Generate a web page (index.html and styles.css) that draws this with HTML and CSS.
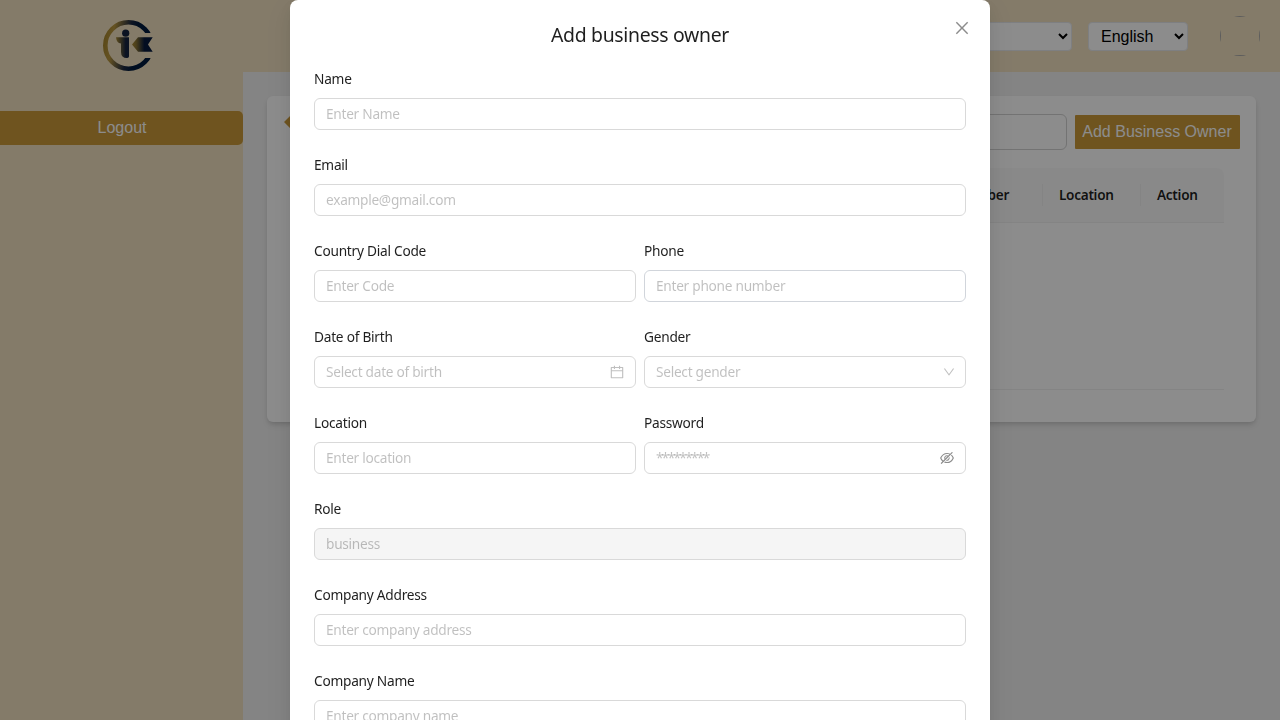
FILE: index.html
```html
<!DOCTYPE html>
<html lang="en">
<head>
<meta charset="utf-8">
<title>Add business owner</title>
<link rel="stylesheet" href="styles.css">
</head>
<body>
<div class="app">
  <aside class="sidebar">
    <svg class="logo" viewBox="102 19 52 53">
      <defs>
        <linearGradient id="ring" gradientUnits="userSpaceOnUse" x1="103" x2="153" y1="40" y2="48"><stop offset="0" stop-color="#a5842c"/><stop offset=".18" stop-color="#b8963f"/><stop offset=".5" stop-color="#1a2740"/><stop offset=".65" stop-color="#001a3c"/></linearGradient>
        <linearGradient id="body" x1="0" x2="1"><stop offset="0" stop-color="#a98a34"/><stop offset=".75" stop-color="#14233e"/></linearGradient>
        <linearGradient id="flag" x1="0" x2="1"><stop offset="0" stop-color="#a98a34"/><stop offset=".2" stop-color="#8a7434"/><stop offset=".6" stop-color="#061a3c"/></linearGradient>
        <clipPath id="gap"><path d="M102 19h52v14h-24v25h24v14h-52z"/></clipPath>
      </defs>
      <circle cx="128.500" cy="45.500" r="23.200" fill="none" stroke="url(#ring)" stroke-width="4.600" clip-path="url(#gap)"/>
      <circle cx="125.700" cy="33.200" r="3.600" fill="#14233e"/>
      <path d="M116 37.300H129V56.500Q128.500 58 127 58Q121 58 121 52V43.500Q116.500 43 116 37.300z" fill="url(#body)"/>
      <path d="M132 44.600L138 37.200H152.700L148 44.600L152.700 51.700H138z" fill="url(#flag)"/>
    </svg>
    <button class="logout">Logout</button>
  </aside>
  <div class="main">
    <header class="topbar">
      <select class="pick pick-wide"><option></option></select>
      <select class="pick"><option>English</option></select>
      <div class="avatar"><div class="avatar-img"></div></div>
    </header>
    <section class="card">
      <div class="toolbar">
        <svg class="back" viewBox="0 0 14 14"><path d="M0 7L7 0v4h7v6H7v4z" fill="#ca993a"/></svg>
        <input class="search">
        <button class="add">Add Business Owner</button>
      </div>
      <div class="table">
        <div class="thead">
          <div class="th th-grow">Phone Number</div>
          <div class="th th-loc">Location</div>
          <div class="th th-act">Action</div>
        </div>
        <div class="tbody"></div>
      </div>
    </section>
  </div>
</div>
<div class="mask">
  <div class="modal">
    <button class="close"><svg viewBox="64 64 896 896"><path d="M799.86 166.31c.02 0 .04.02.08.06l57.69 57.7c.04.03.05.05.06.08a.12.12 0 010 .06c0 .03-.02.05-.06.09L569.93 512l287.7 287.7c.04.04.05.06.06.09a.12.12 0 010 .07c0 .02-.02.04-.06.08l-57.7 57.69c-.03.04-.05.05-.07.06a.12.12 0 01-.07 0c-.03 0-.05-.02-.09-.06L512 569.93l-287.7 287.7c-.04.04-.06.05-.09.06a.12.12 0 01-.07 0c-.02 0-.04-.02-.08-.06l-57.69-57.7c-.04-.03-.05-.05-.06-.07a.12.12 0 010-.07c0-.03.02-.05.06-.09L454.07 512l-287.7-287.7c-.04-.04-.05-.06-.06-.09a.12.12 0 010-.07c0-.02.02-.04.06-.08l57.7-57.69c.03-.04.05-.05.07-.06a.12.12 0 01.07 0c.03 0 .05.02.09.06L512 454.07l287.7-287.7c.04-.04.06-.05.09-.06a.12.12 0 01.07 0z"/></svg></button>
    <h1 class="title">Add business owner</h1>
    <form class="form">
      <div class="item wide"><label class="label">Name</label><div class="field"><span class="hint">Enter Name</span></div></div>
      <div class="item wide"><label class="label">Email</label><div class="field"><span class="hint">example@gmail.com</span></div></div>
      <div class="item"><label class="label">Country Dial Code</label><div class="field"><span class="hint">Enter Code</span></div></div>
      <div class="item"><label class="label">Phone</label><div class="field field-cool"><span class="hint">Enter phone number</span></div></div>
      <div class="item"><label class="label">Date of Birth</label><div class="field"><span class="hint">Select date of birth</span><svg class="icon" viewBox="64 64 896 896"><path d="M880 184H712v-64c0-4.400-3.600-8-8-8h-56c-4.400 0-8 3.600-8 8v64H384v-64c0-4.400-3.600-8-8-8h-56c-4.400 0-8 3.600-8 8v64H144c-17.700 0-32 14.300-32 32v664c0 17.700 14.300 32 32 32h736c17.700 0 32-14.300 32-32V216c0-17.700-14.300-32-32-32zm-40 656H184V460h656v380zM184 392V256h128v48c0 4.400 3.600 8 8 8h56c4.400 0 8-3.600 8-8v-48h256v48c0 4.400 3.600 8 8 8h56c4.400 0 8-3.600 8-8v-48h128v136H184z"/></svg></div></div>
      <div class="item"><label class="label">Gender</label><div class="field"><span class="hint">Select gender</span><svg class="icon icon-down" viewBox="64 64 896 896"><path d="M884 256h-75c-5.100 0-9.900 2.500-12.900 6.600L512 654.200 227.900 262.600c-3-4.100-7.800-6.600-12.900-6.600h-75c-6.500 0-10.300 7.400-6.500 12.700l352.600 486.100c12.800 17.600 39 17.600 51.700 0l352.600-486.100c3.900-5.300.1-12.700-6.400-12.700z"/></svg></div></div>
      <div class="item"><label class="label">Location</label><div class="field"><span class="hint">Enter location</span></div></div>
      <div class="item"><label class="label">Password</label><div class="field"><span class="hint stars">*********</span><svg class="icon icon-eye" viewBox="64 64 896 896"><path d="M942.2 486.2Q889.47 375.11 816.7 305l-50.88 50.88C807.31 395.53 843.45 447.4 874.7 512 791.5 684.2 673.4 766 512 766q-72.67 0-133.87-22.38L323 798.75Q408 838 512 838q288.3 0 430.2-300.3a60.29 60.29 0 000-51.5zm-63.57-320.64L836 122.88a8 8 0 00-11.32 0L715.31 232.2Q624.86 186 512 186q-288.3 0-430.2 300.3a60.3 60.3 0 000 51.5q56.69 119.4 136.5 191.41L112.48 835a8 8 0 000 11.31L155.17 889a8 8 0 0011.31 0l712.15-712.12a8 8 0 000-11.32zM149.3 512C232.6 339.8 350.7 258 512 258c54.54 0 104.13 9.36 149.12 28.39l-70.3 70.3a176 176 0 00-238.13 238.13l-83.42 83.42C223.1 637.49 183.3 582.28 149.3 512zm246.7 0a112.11 112.11 0 01146.2-106.69L401.31 546.2A112 112 0 01396 512z"/><path d="M508 624c-3.46 0-6.87-.16-10.25-.47l-52.82 52.82a176.09 176.09 0 00227.42-227.42l-52.82 52.82c.31 3.38.47 6.790.47 10.250a111.94 111.94 0 01-112 112z"/></svg></div></div>
      <div class="item wide"><label class="label">Role</label><div class="field field-off"><span class="hint">business</span></div></div>
      <div class="item wide"><label class="label">Company Address</label><div class="field"><span class="hint">Enter company address</span></div></div>
      <div class="item wide"><label class="label">Company Name</label><div class="field"><span class="hint">Enter company name</span></div></div>
    </form>
  </div>
</div>
</body>
</html>
```
FILE: styles.css
```css
* { box-sizing: border-box; }
body { margin: 0; height: 720px; overflow: hidden; font-family: "Noto Sans", sans-serif; }
button { border: 0; padding: 0; font: 16px/24px "Liberation Sans", sans-serif; }

.app { display: flex; height: 720px; background: #f0f0f0; }
.sidebar { width: 243px; background: #f0e0c0; display: flex; flex-direction: column; align-items: center; padding-top: 19px; }
.logo { width: 52px; height: 53px; margin-left: 13px; }
.logout { align-self: stretch; height: 34px; margin-top: 39px; padding-left: 1px; background: #ca993a; color: #fff; border-radius: 0 5px 5px 0; }
.main { flex: 1; min-width: 0; }
.topbar { height: 72px; background: #f0e0c0; display: flex; align-items: center; justify-content: flex-end; padding-right: 20px; }
.pick { width: 100px; height: 29px; margin: 0 0 0 16px; padding: 0 8px; border: 1px solid #e5e7eb; border-radius: 4px; background: #fff; color: #000; font: 16px "Liberation Sans", sans-serif; }
.pick-wide { width: 160px; }
.avatar { width: 40px; height: 40px; margin-left: 32px; border-radius: 50%; overflow: hidden; }
.avatar-img { width: 40px; height: 40px; border: 1px solid #a8a8a8; }

.card { margin: 24px 24px 0; height: 326px; background: #fff; border-radius: 6px; box-shadow: 0 4px 6px -1px rgba(0,0,0,.1), 0 2px 4px -1px rgba(0,0,0,.1); padding: 18px 16px 0; }
.toolbar { display: flex; align-items: center; gap: 8px; height: 36px; }
.back { width: 14px; height: 14px; margin: -20px auto 0 1px; }
.search { width: 250px; height: 36px; border: 1px solid #d1d1d1; border-radius: 6px; background: #fff; }
.add { width: 165px; height: 34px; padding-right: 1px; border-radius: 1px; background: #ca993a; color: #fff; }
.table { margin: 18px 16px 0; }
.thead { display: flex; align-items: center; height: 55px; background: #fafafa; border-bottom: 1px solid #f0f0f0; border-radius: 8px 8px 0 0; font-size: 13.6px; letter-spacing: -.3px; font-weight: 600; color: rgba(0,0,0,.88); }
.th { height: 22px; line-height: 22px; padding: 0 16px; border-right: 1px solid #f0f0f0; }
.th-grow { flex: 1; text-align: right; padding-right: 33px; }
.th-loc { width: 98px; }
.th-act { width: 83px; border-right: 0; }
.tbody { height: 167px; border-bottom: 1px solid #f0f0f0; }

.mask { position: fixed; inset: 0; background: rgba(0,0,0,.45); display: flex; justify-content: center; }
.modal { position: relative; width: 700px; height: 900px; flex: none; background: #fff; border-radius: 8px; padding: 20px 24px; box-shadow: 0 6px 16px 0 rgba(0,0,0,.08), 0 3px 6px -4px rgba(0,0,0,.12), 0 9px 28px 8px rgba(0,0,0,.05); }
.close { position: absolute; top: 17px; right: 17px; width: 22px; height: 22px; background: none; display: grid; place-items: center; }
.close svg { width: 16px; height: 16px; fill: rgba(0,0,0,.45); }
.title { margin: 0; height: 30px; font-size: 19.4px; letter-spacing: -.3px; line-height: 30px; font-weight: 400; text-align: center; color: rgba(0,0,0,.88); }
.form { display: grid; grid-template-columns: 1fr 1fr; gap: 24px 8px; margin-top: 18px; }
.item { height: 62px; }
.wide { grid-column: span 2; }
.label { display: block; height: 30px; line-height: 22px; font-size: 13.7px; letter-spacing: -.25px; color: rgba(0,0,0,.88); }
.field { display: flex; align-items: center; justify-content: space-between; height: 32px; padding: 0 11px; border: 1px solid #d9d9d9; border-radius: 6px; background: #fff; }
.field-cool { border-color: #d1d5db; }
.field-off { background: #f5f5f5; }
.hint { font-size: 13.7px; letter-spacing: -.28px; line-height: 22px; color: rgba(0,0,0,.25); }
.stars { letter-spacing: -1.7px; }
.icon { width: 14px; height: 14px; fill: rgba(0,0,0,.25); }
.icon-down { width: 12px; height: 12px; margin-right: -1px; }
.icon-eye { fill: rgba(0,0,0,.45); }
```
